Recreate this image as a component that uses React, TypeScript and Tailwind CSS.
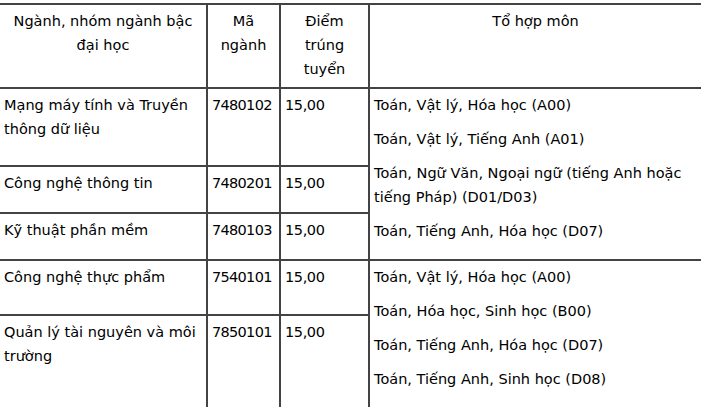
const rows = [
  { name: "Mạng máy tính và Truyền thông dữ liệu", code: "7480102", score: "15,00", h: "h-[78px]" },
  { name: "Công nghệ thông tin", code: "7480201", score: "15,00", h: "h-[47px]" },
  { name: "Kỹ thuật phần mềm", code: "7480103", score: "15,00", h: "h-[47px]" },
  { name: "Công nghệ thực phẩm", code: "7540101", score: "15,00", h: "h-[55px]" },
  { name: "Quản lý tài nguyên và môi trường", code: "7850101", score: "15,00", h: "h-[120px]" },
];

const groupA = [
  "Toán, Vật lý, Hóa học (A00)",
  "Toán, Vật lý, Tiếng Anh (A01)",
  "Toán, Ngữ Văn, Ngoại ngữ (tiếng Anh hoặc tiếng Pháp) (D01/D03)",
  "Toán, Tiếng Anh, Hóa học (D07)",
];

const groupB = [
  "Toán, Vật lý, Hóa học (A00)",
  "Toán, Hóa học, Sinh học (B00)",
  "Toán, Tiếng Anh, Hóa học (D07)",
  "Toán, Tiếng Anh, Sinh học (D08)",
];

const cell = "border-2 border-[#434343] align-top px-[4px] pt-[4px]";

function Subjects({ items }: { items: string[] }) {
  return (
    <div className="pr-[6px]">
      {items.map((s, i) => (
        <p key={i} className="mb-[10px]">
          {s}
        </p>
      ))}
    </div>
  );
}

export default function App() {
  return (
    <div className="w-[701px] h-[407px] overflow-hidden bg-white pt-[3px]">
      <table
        className="table-fixed border-collapse ml-[-2px] w-[705px] text-[14.5px] leading-[24px] text-black"
        style={{ fontFamily: '"DejaVu Sans", Verdana, sans-serif' }}
      >
        <colgroup>
          <col className="w-[208px]" />
          <col className="w-[73px]" />
          <col className="w-[89px]" />
          <col />
        </colgroup>
        <thead>
          <tr className="h-[84px]">
            <th className={`${cell} text-center font-normal`}>
              Ngành, nhóm ngành bậc
              <br />
              đại học
            </th>
            <th className={`${cell} text-center font-normal`}>
              Mã
              <br />
              ngành
            </th>
            <th className={`${cell} text-center font-normal`}>
              Điểm
              <br />
              trúng
              <br />
              tuyển
            </th>
            <th className={`${cell} text-center font-normal`}>Tổ hợp môn</th>
          </tr>
        </thead>
        <tbody>
          {rows.map((r, i) => (
            <tr key={r.code} className={r.h}>
              <td className={cell}>{r.name}</td>
              <td className={`${cell} whitespace-nowrap tracking-[-0.7px]`}>{r.code}</td>
              <td className={`${cell} tracking-[-0.4px]`}>{r.score}</td>
              {i === 0 && (
                <td rowSpan={3} className={cell}>
                  <Subjects items={groupA} />
                </td>
              )}
              {i === 3 && (
                <td rowSpan={2} className={cell}>
                  <Subjects items={groupB} />
                </td>
              )}
            </tr>
          ))}
        </tbody>
      </table>
    </div>
  );
}
